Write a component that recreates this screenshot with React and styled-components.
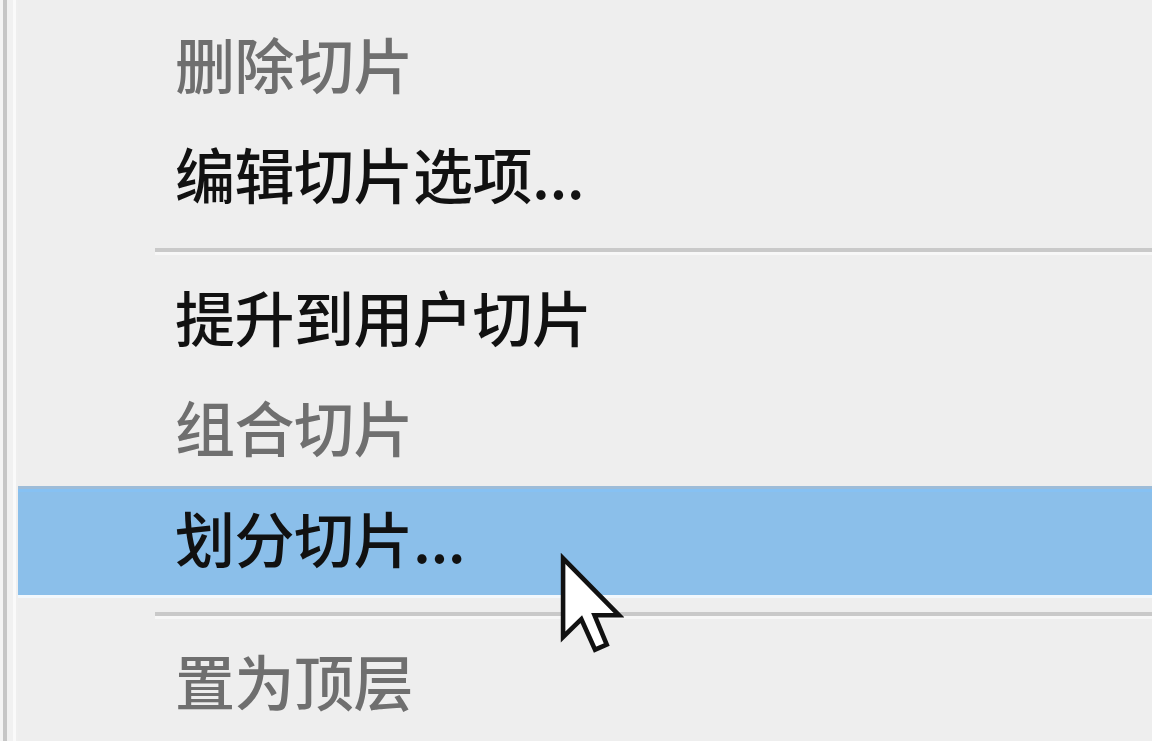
import React from "react";
import styled, { createGlobalStyle } from "styled-components";

const Global = createGlobalStyle`
  html, body { margin: 0; padding: 0; background: #eeeeee; overflow: hidden; }
  #root { width: 1152px; height: 741px; }
`;

const Menu = styled.div`
  position: relative;
  box-sizing: border-box;
  width: 1152px;
  height: 741px;
  background: #eeeeee;
  border-left: 3px solid #f4f4f4;
  display: flex;
  font-family: "Noto Sans CJK SC", "Noto Sans", sans-serif;
`;

const Rail = styled.div`
  width: 4px;
  flex: none;
  background: #c6c6c6;
`;

const Gutter = styled.div`
  width: 11px;
  flex: none;
  background: linear-gradient(to right, #f1f1f1 0 6px, #fafafa 6px 9px, #efefef 9px);
`;

const List = styled.div`
  flex: 1;
  display: flex;
  flex-direction: column;
  padding-top: 13px;
`;

const Item = styled.div`
  box-sizing: border-box;
  height: ${(p) => (p.$active ? 112 : 110)}px;
  display: flex;
  align-items: center;
  padding-left: 157px;
  padding-bottom: 12px;
  font-size: 60px;
  font-weight: 500;
  letter-spacing: -0.5px;
  color: ${(p) => (p.$disabled ? "#6f6f6f" : "#111111")};
  background: ${(p) => (p.$active ? "#8bbfea" : "transparent")};
  border-top: ${(p) => (p.$active ? "3px solid #9dbcd8" : "none")};
  border-bottom: ${(p) => (p.$active ? "3px solid #f2f8fd" : "none")};
  ${(p) => p.$active && "box-shadow: inset 0 3px 0 #86c1f3;"}
`;

const Separator = styled.div`
  height: ${(p) => p.$h}px;
  display: flex;
  align-items: center;
  padding-left: 137px;
  &::after {
    content: "";
    flex: 1;
    height: 4px;
    background: #c9c9c9;
    box-shadow: 0 3px 0 #f7f7f7;
  }
`;

const Cursor = styled.svg`
  position: absolute;
  left: 555px;
  top: 553px;
  width: 66px;
  height: 102px;
  pointer-events: none;
`;

export default function App() {
  return (
    <>
      <Global />
      <Menu>
        <Rail />
        <Gutter />
        <List>
          <Item $disabled>删除切片</Item>
          <Item>编辑切片选项...</Item>
          <Separator $h={33} />
          <Item>提升到用户切片</Item>
          <Item $disabled>组合切片</Item>
          <Item $active>划分切片...</Item>
          <Separator $h={32} />
          <Item $disabled>置为顶层</Item>
        </List>
        <Cursor viewBox="-1 -1 13 20">
          <path
            d="M0 0 L0 15.5 L3.6 12 L6.3 18 L8.6 17 L6.2 11.2 L11 11.2 Z"
            fill="#ffffff"
            stroke="#111111"
            strokeWidth="0.9"
            strokeLinejoin="miter"
          />
        </Cursor>
      </Menu>
    </>
  );
}
